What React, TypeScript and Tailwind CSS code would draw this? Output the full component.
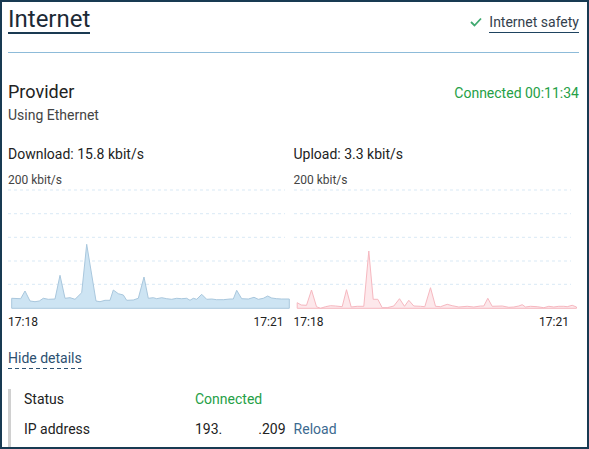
import React from 'react'

type Pt = [number, number]

// points read off the reference at 3x, converted to chart-local pixels
const downRaw: Pt[] = [
  [35, 322], [62, 323], [75, 300], [90, 330], [105, 332], [118, 330], [130, 322], [145, 325],
  [165, 324], [180, 253], [195, 322], [210, 320], [225, 325], [245, 305], [260, 160], [288, 330],
  [300, 332], [315, 328], [330, 328], [340, 297], [355, 308], [370, 312], [380, 328], [400, 327],
  [415, 322], [432, 258], [445, 322], [460, 320], [470, 323], [485, 320], [500, 323], [515, 325],
  [530, 322], [545, 323], [560, 322], [570, 328], [580, 322], [590, 325], [605, 310], [620, 325],
  [635, 324], [650, 326], [670, 326], [690, 324], [700, 324], [710, 298], [725, 323], [745, 324],
  [762, 319], [775, 325], [790, 322], [803, 315], [815, 321], [830, 323], [845, 324], [868, 324],
]

const upRaw: Pt[] = [
  [50, 335], [62, 342], [78, 343], [93, 297], [108, 347], [120, 352], [135, 347], [150, 344],
  [165, 345], [185, 347], [198, 296], [212, 348], [230, 346], [250, 346], [265, 180], [278, 325],
  [292, 325], [305, 350], [320, 350], [340, 345], [357, 323], [372, 346], [385, 328], [400, 345],
  [420, 346], [433, 347], [450, 290], [465, 346], [480, 347], [500, 340], [515, 344], [535, 348],
  [560, 346], [580, 348], [600, 345], [610, 345], [622, 322], [635, 346], [665, 345], [685, 349],
  [700, 348], [715, 345], [725, 341], [735, 348], [750, 346], [770, 347], [790, 350], [805, 346],
  [820, 348], [835, 346], [850, 346], [860, 347], [875, 343], [888, 348],
]

const BASE = 120.3

function toPath(raw: Pt[], dx: number) {
  const pts = raw.map(([x, y]) => [x / 3 - dx, y / 3 + 3] as Pt)
  const first = pts[0]
  const last = pts[pts.length - 1]
  return (
    `M${first[0].toFixed(1)} ${BASE} ` +
    pts.map(([x, y]) => `L${x.toFixed(1)} ${y.toFixed(1)}`).join(' ') +
    ` L${last[0].toFixed(1)} ${BASE} Z`
  )
}

const grid = [2, 25.7, 49.3, 73, 96.3]

function Chart({ label, scale, raw, dx, fill, stroke }: {
  label: string
  scale: string
  raw: Pt[]
  dx: number
  fill: string
  stroke: string
}) {
  return (
    <div className="flex flex-col">
      <div className="text-[14px] leading-[20px] text-[#222]">{label}</div>
      <div className="mt-[8px] text-[12px] leading-[16px] text-[#444]">{scale}</div>
      <svg width="285" height="124" viewBox="0 0 285 124" className="block">
        {grid.map((y) => (
          <line key={y} x1="0" x2="277" y1={y} y2={y} stroke="#d9e9f5" strokeWidth="1" strokeDasharray="3 3" />
        ))}
        <path d={toPath(raw, dx)} fill={fill} stroke={stroke} strokeWidth="1" strokeLinejoin="round" />
      </svg>
      <div className="mt-[2px] flex justify-between pr-[10px] text-[12px] leading-[16px] text-[#222]">
        <span>17:18</span>
        <span>17:21</span>
      </div>
    </div>
  )
}

export default function App() {
  return (
    <div className="h-[449px] w-[589px] overflow-hidden border-2 border-[#183a52] bg-white pl-[6px] pr-[8px] pt-[4px] font-['Roboto','Liberation_Sans',sans-serif] text-[#222]">
      {/* Header */}
      <div className="flex items-end justify-between">
        <h1 className="border-b-2 border-[#1a3a52] text-[24px] leading-[26px] font-normal text-[#1c2a36]">Internet</h1>
        <div className="mb-[1px] flex items-center gap-[7px]">
          <svg width="12" height="10" viewBox="0 0 12 10" className="mt-[-2px]">
            <polyline points="1,5 4.5,8.5 11,1.5" fill="none" stroke="#3fa96f" strokeWidth="1.8" />
          </svg>
          <span className="border-b border-[#1e4360] text-[14px] leading-[20px] text-[#34414d]">Internet safety</span>
        </div>
      </div>
      <div className="mt-[18px] h-px bg-[#8dbbd9]" />

      {/* Provider */}
      <div className="mt-[27px] flex items-baseline justify-between">
        <div className="text-[18px] leading-[24px]">Provider</div>
        <div className="text-[14px] leading-[24px] text-[#25a046]">Connected 00:11:34</div>
      </div>
      <div className="text-[14px] leading-[20px] text-[#444]">Using Ethernet</div>

      {/* Charts */}
      <div className="mt-[19px] grid grid-cols-2">
        <Chart label="Download: 15.8 kbit/s" scale="200 kbit/s" raw={downRaw} dx={8} fill="#cde4f3" stroke="#a9c7dd" />
        <Chart label="Upload: 3.3 kbit/s" scale="200 kbit/s" raw={upRaw} dx={13.5} fill="#fde8eb" stroke="#f6b8c0" />
      </div>

      {/* Details */}
      <div className="mt-[16px]">
        <span className="inline-block bg-[repeating-linear-gradient(90deg,#2d5070_0_4px,transparent_4px_7px)] bg-[length:100%_1px] bg-bottom bg-no-repeat pb-[1px] text-[14px] leading-[20px] text-[#2d5070]">
          Hide details
        </span>
      </div>
      <div className="mt-[19px] flex flex-col gap-[10px] border-l-[3px] border-[#d0d0d0] pb-[20px] pl-[13px] text-[14px] leading-[20px]">
        <div className="flex">
          <span className="w-[171px]">Status</span>
          <span className="text-[#25a046]">Connected</span>
        </div>
        <div className="flex">
          <span className="w-[171px]">IP address</span>
          <span>193.</span>
          <span className="w-[36px]" />
          <span>.209</span>
          <span className="ml-[8px] text-[#3c6a90]">Reload</span>
        </div>
      </div>
    </div>
  )
}
